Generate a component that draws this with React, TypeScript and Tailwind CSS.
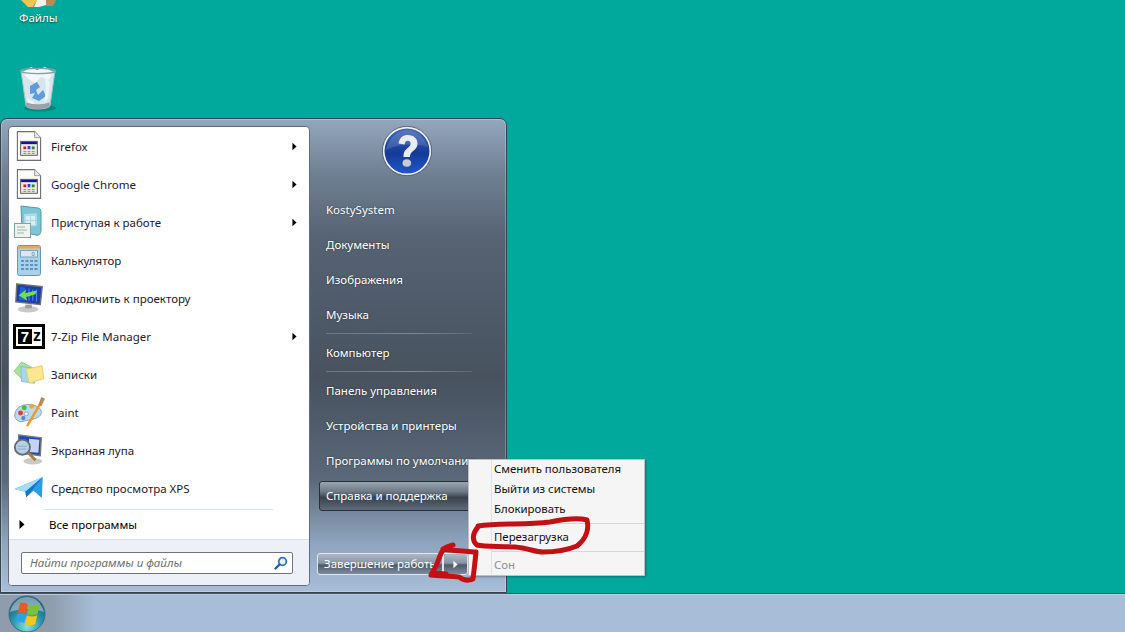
import type { ReactNode } from "react";

const FileIcon = () => (
  <svg width="26" height="32" viewBox="0 0 28 34">
    <path d="M1.5 1.5H20L26.5 8V32.5H1.5Z" fill="#fbfbf8" stroke="#6e6e6e" strokeWidth="1.2" />
    <path d="M20 1.5V8H26.5" fill="#e8e8e8" stroke="#9a9a9a" />
    <rect x="5" y="12" width="18" height="15" fill="#ecebe0" stroke="#555" />
    <rect x="5.5" y="12.5" width="17" height="2.5" fill="#14149a" />
    <rect x="8" y="17.5" width="3" height="3" fill="#d91c1c" />
    <rect x="12.5" y="17" width="3" height="3.5" fill="#2a46d8" />
    <rect x="17" y="17.5" width="3" height="3" fill="#1f8a2c" />
    <path d="M8 23h3M12.5 23h3M17 23h3M8 25h3M12.5 25h3M17 25h3" stroke="#888" />
  </svg>
);

const GettingStartedIcon = () => (
  <svg width="32" height="34" viewBox="0 0 32 34">
    <path d="M8 1L25 3C27 3 28 5 28 7V25C28 29 26 31 23 30L9 27Z" fill="#7cc5d4" stroke="#4c9cb0" />
    <path d="M11 9l13-1v13l-13 1Z" fill="#a9dbe4" />
    <rect x="13" y="11" width="4" height="4" fill="#d7eef2" />
    <rect x="18" y="11" width="4" height="4" fill="#d7eef2" />
    <rect x="13" y="16" width="4" height="4" fill="#d7eef2" />
    <rect x="18" y="16" width="4" height="4" fill="#d7eef2" />
    <rect x="1.5" y="18.5" width="16" height="14" fill="#eef3ee" stroke="#79a8a0" />
    <path d="M4 22h8M4 25h10M4 28h7" stroke="#9fb3ba" />
  </svg>
);

const CalculatorIcon = () => (
  <svg width="24" height="31" viewBox="0 0 24 31">
    <rect x="0.5" y="0.5" width="23" height="30" rx="2" fill="#a9d1ea" stroke="#5f97bf" />
    <rect x="1" y="1" width="22" height="2.5" fill="#efa846" />
    <rect x="3.5" y="5.5" width="17" height="6.5" fill="#dbe9ef" stroke="#7ea3b8" />
    <text x="14.5" y="11" fontSize="6" fontFamily="Liberation Sans, sans-serif" fill="#5b7384">0</text>
    <path d="M4 15h3v2H4zM8.5 15h3v2h-3zM13 15h3v2h-3zM17.5 15h3v2h-3zM4 19h3v2H4zM8.5 19h3v2h-3zM13 19h3v2h-3zM17.5 19h3v2h-3zM4 23h3v2H4zM8.5 23h3v2h-3zM13 23h3v2h-3zM17.5 23h3v2h-3z" fill="#5d93b9" />
  </svg>
);

const ProjectorIcon = () => (
  <svg width="32" height="32" viewBox="0 0 32 34">
    <ellipse cx="15" cy="29" rx="11" ry="3.5" fill="#c9c9c9" />
    <path d="M12 24h7v4h-7Z" fill="#9b9fa3" />
    <path d="M3 2L30 5L28 24L2 21Z" fill="#1d3fae" stroke="#6d7278" strokeWidth="1.5" />
    <path d="M7 5L12 6V20L5 19Z" fill="#1f63d6" />
    <path d="M16 7v13M20 8v12M24 8v13" stroke="#4a86e8" strokeWidth="1.2" />
    <path d="M5 14L13 8L12 12L24 9L23 13L13 16L14 20Z" fill="#6fe04e" />
  </svg>
);

const SevenZipIcon = () => (
  <div className="flex h-[25px] w-[32px] items-center gap-[1px] border-[3px] border-black bg-white pl-[2px]">
    <div className="flex h-[15px] w-[14px] items-center justify-center bg-black font-['Liberation_Sans',sans-serif] text-[15px] font-bold leading-none text-white">
      7
    </div>
    <span className="font-['Liberation_Sans',sans-serif] text-[16px] font-bold leading-none text-black">z</span>
  </div>
);

const NotesIcon = () => (
  <svg width="32" height="26" viewBox="0 0 34 28">
    <path d="M1 11L9 1L22 8L12 22Z" fill="#a9e29a" stroke="#8ecb80" />
    <path d="M8 6L24 8L23 24L9 22Z" fill="#a8d6ef" stroke="#86bcd9" />
    <path d="M14 9L31 5L33 19L17 24Z" fill="#fbe88e" stroke="#e5cd64" />
  </svg>
);

const PaintIcon = () => (
  <svg width="32" height="32" viewBox="0 0 34 34">
    <path d="M2 19C3 11 13 7 23 10C32 13 32 20 26 23C20 26 15 25 11 27C6 28 1 25 2 19Z" fill="#bcd8ea" stroke="#7ba5c0" />
    <circle cx="8" cy="18" r="2.6" fill="#e23b34" />
    <circle cx="12" cy="12.5" r="2.6" fill="#5cb04a" />
    <circle cx="20" cy="11" r="2.6" fill="#f0a628" />
    <circle cx="14" cy="19" r="2.2" fill="#eef6fb" stroke="#7ba5c0" />
    <circle cx="11" cy="23.5" r="2.2" fill="#4a86d8" />
    <path d="M15 32L29 8" stroke="#ef9b25" strokeWidth="2.6" />
    <path d="M27 9L30 1L34 3L30 11Z" fill="#b88a54" />
  </svg>
);

const MagnifierIcon = () => (
  <svg width="32" height="32" viewBox="0 0 32 34">
    <ellipse cx="20" cy="29" rx="10" ry="3.5" fill="#c9c9c9" />
    <path d="M5 1L29 4L28 23L5 20Z" fill="#1d46c2" stroke="#74797f" strokeWidth="1.5" />
    <path d="M16 5L27 6L26 20L16 19Z" fill="#c8d4ee" />
    <circle cx="9" cy="14" r="8" fill="#b9d0e4" stroke="#5d6c78" strokeWidth="2" />
    <path d="M4 13h10M4 16h9" stroke="#8fa8bf" />
    <path d="M15 20L23 28" stroke="#b27a3b" strokeWidth="3" />
  </svg>
);

const XpsIcon = () => (
  <svg width="32" height="22" viewBox="0 0 32 24">
    <path d="M0 13L31 0L30 23L21 15L13 22L12 16Z" fill="#2a9ce8" />
    <path d="M0 13L31 0L12 16Z" fill="#a5dcfa" />
    <path d="M31 0L13 22L12 16Z" fill="#1976c4" />
  </svg>
);

const QuestionIcon = () => (
  <svg width="50" height="50" viewBox="0 0 50 50">
    <defs>
      <linearGradient id="helpBlue" x1="0" y1="0" x2="0" y2="1">
        <stop offset="0" stopColor="#3f67b8" />
        <stop offset="0.55" stopColor="#153a96" />
        <stop offset="1" stopColor="#1f58cf" />
      </linearGradient>
    </defs>
    <circle cx="25" cy="25" r="23.5" fill="url(#helpBlue)" stroke="#f1f3f5" strokeWidth="2" />
    <circle cx="25" cy="25" r="24.6" fill="none" stroke="#33425c" strokeWidth="0.7" />
    <path d="M4 24C7 10 17 4 25 4C35 4 43 11 46 21C32 17 16 18 4 24Z" fill="#ffffff" opacity="0.14" />
    <path
      d="M16.5 17.5C17.5 11.5 21 9 26 9C31.5 9 35.5 12.5 35.5 17.5C35.5 21.5 33 23.5 30.5 25.5C28.5 27 28 28.5 28 31H21.5C21.3 27 22.3 24.8 25 22.6C27.3 20.7 28.6 19.6 28.6 17.8C28.6 16 27.6 14.8 25.8 14.8C23.8 14.8 22.9 16.2 22.6 18.5Z"
      fill="#e8ebf0"
    />
    <ellipse cx="24.8" cy="37" rx="4.3" ry="3.8" fill="#c6cbd4" />
  </svg>
);

const RecycleBin = () => (
  <svg width="38" height="46" viewBox="0 0 38 46">
    <ellipse cx="21" cy="42" rx="16" ry="3.5" fill="#0a7a70" opacity="0.7" />
    <path d="M2 5L7 40C9 44 29 44 31 40L36 5Z" fill="#d5e6ee" stroke="#a9bcc6" />
    <path d="M4 6L12 1L18 4L26 1L34 6L30 14L22 11L16 17L8 12Z" fill="#f1f7fa" />
    <path d="M11 20L18 16L21 21L17 24L19 29L24 24L27 30L20 35L13 32L16 27L11 28Z" fill="#5f9bd8" />
    <path d="M26 12L31 16L29 32L25 37L27 24Z" fill="#edf4f7" />
    <path d="M8 32L15 36L16 40L9 38Z" fill="#edf4f7" />
    <ellipse cx="19" cy="5" rx="17.5" ry="2.6" fill="none" stroke="#8d9ba3" strokeWidth="1.4" />
    <path d="M7 40C10 44 28 44 31 40L30.5 36C27 39 11 39 7.5 36Z" fill="#9aa3a8" />
  </svg>
);

const FolderTop = () => (
  <svg width="36" height="8" viewBox="0 0 36 8">
    <path d="M1 0L8 7H13L17 0Z" fill="#f2c54e" />
    <path d="M17 0H26V5L19 7H14Z" fill="#f5f2e4" />
    <path d="M26 0H36L33 6H26Z" fill="#b98a5a" />
  </svg>
);

const WindowsOrb = () => (
  <svg width="40" height="40" viewBox="0 0 40 40">
    <defs>
      <radialGradient id="orbBg" cx="0.5" cy="0.85" r="0.75">
        <stop offset="0" stopColor="#8fe0d8" />
        <stop offset="0.5" stopColor="#2b9fb0" />
        <stop offset="1" stopColor="#1a5f7c" />
      </radialGradient>
      <filter id="orbBlur">
        <feGaussianBlur stdDeviation="0.4" />
      </filter>
    </defs>
    <circle cx="20" cy="20" r="18" fill="url(#orbBg)" stroke="#3d6d86" />
    <path d="M3 18C6 7 13 3 20 3C28 3 34 8 37 18C27 14 13 14 3 18Z" fill="#cfd6d8" opacity="0.55" />
    <g filter="url(#orbBlur)">
      <path d="M13 9C16 8 18.5 9 21 10.5L19 20C16.5 18.5 13.5 18 10.8 19Z" fill="#ea5a25" />
      <path d="M22 10.5C25 12 29 12 33 9L30.5 20C27 21.5 23.5 21.5 20 20Z" fill="#7cc238" />
      <path d="M10.5 20C13.5 19 16.5 19.5 19 21L17.2 29C14.5 27.5 11 27.2 8.5 28.5Z" fill="#2fa2e6" />
      <path d="M20 21.5C23 23 27 23 30.2 21.2L28.3 30C25 31.8 21.2 31.5 18 30Z" fill="#f8c61e" />
    </g>
  </svg>
);

const SearchGlass = () => (
  <svg width="14" height="14" viewBox="0 0 14 14">
    <circle cx="8.5" cy="5.5" r="3.8" fill="#e8f3fb" stroke="#2a76b8" strokeWidth="1.8" />
    <path d="M5.5 8.5L1.5 12.5" stroke="#1d5f9e" strokeWidth="2.4" strokeLinecap="round" />
  </svg>
);

const Caret = ({ className }: { className: string }) => (
  <svg className={className} viewBox="0 0 6 10" fill="currentColor">
    <path d="M0.5 0.5L5.5 5L0.5 9.5Z" />
  </svg>
);

const programs: { label: string; icon: ReactNode; sub?: boolean }[] = [
  { label: "Firefox", icon: <FileIcon />, sub: true },
  { label: "Google Chrome", icon: <FileIcon />, sub: true },
  { label: "Приступая к работе", icon: <GettingStartedIcon />, sub: true },
  { label: "Калькулятор", icon: <CalculatorIcon /> },
  { label: "Подключить к проектору", icon: <ProjectorIcon /> },
  { label: "7-Zip File Manager", icon: <SevenZipIcon />, sub: true },
  { label: "Записки", icon: <NotesIcon /> },
  { label: "Paint", icon: <PaintIcon /> },
  { label: "Экранная лупа", icon: <MagnifierIcon /> },
  { label: "Средство просмотра XPS", icon: <XpsIcon /> },
];

const places = ["KostySystem", "Документы", "Изображения", "Музыка"];
const system = ["Панель управления", "Устройства и принтеры", "Программы по умолчанию"];

const PlaceRow = ({ label }: { label: string }) => (
  <div className="flex h-[35px] items-center whitespace-nowrap pl-[15px] text-[11.5px] text-white [text-shadow:0_0_2px_rgba(0,0,0,0.5)]">
    {label}
  </div>
);

const PlaceSeparator = () => (
  <div className="flex h-[3px] items-center pl-[15px] pr-[34px]">
    <div className="h-px w-full bg-[linear-gradient(90deg,#6b7685,#7d8896_60%,#5d6876)]" />
  </div>
);

const MenuItem = ({ label, disabled }: { label: string; disabled?: boolean }) => (
  <div className={`flex h-[20px] items-center pl-[25px] text-[11.4px] ${disabled ? "text-[#8f8f8f]" : "text-[#111]"}`}>
    {label}
  </div>
);

const MenuSeparator = () => (
  <div className="flex h-[8px] items-center pl-[23px]">
    <div className="h-px w-full bg-[#d7d7d7]" />
  </div>
);

export default function App() {
  return (
    <div className="flex h-[632px] w-[1125px] flex-col overflow-hidden bg-[#00a99c] font-['Noto_Sans','Open_Sans',sans-serif]">
      <main className="relative flex-1">
        {/* desktop icons */}
        <div className="absolute left-[20px] top-0">
          <FolderTop />
        </div>
        <div className="absolute left-[19px] top-[9px] text-[11.5px] text-white [text-shadow:0_1px_2px_rgba(0,0,0,0.6)]">
          Файлы
        </div>
        <div className="absolute left-[19px] top-[66px]">
          <RecycleBin />
        </div>

        {/* start menu */}
        <div className="absolute bottom-0 left-0 flex h-[475px] w-[507px] rounded-t-[7px] border border-[#39434e] bg-[linear-gradient(180deg,#93a7be_0%,#6f7f92_12%,#566373_25%,#48525f_55%,#5a6879_76%,#90a6c0_90%,#a7bdd8_100%)] pl-[7px] pt-[7px] shadow-[inset_0_0_0_1px_rgba(255,255,255,0.25)]">
          <div className="flex h-[460px] w-[302px] flex-col overflow-hidden rounded-[4px] border border-[#5f6d7d] bg-white">
            <div className="flex h-[380px] flex-col">
              {programs.map((p) => (
                <div key={p.label} className="flex h-[38px] shrink-0 items-center">
                  <div className="flex w-[42px] shrink-0 items-center justify-center pr-[2px]">{p.icon}</div>
                  <span className="flex-1 pt-[2px] text-[11.5px] text-[#1c1a2c]">{p.label}</span>
                  {p.sub && <Caret className="mr-[12px] h-[9px] w-[5px] text-black" />}
                </div>
              ))}
            </div>
            <div className="mx-[36px] mt-[2px] h-px bg-[#d6e1ef]" />
            <div className="flex h-[29px] items-center pl-[10px] text-[11.5px] text-black">
              <Caret className="h-[11px] w-[6px] text-black" />
              <span className="pl-[24px]">Все программы</span>
            </div>
            <div className="flex flex-1 items-center border-t border-[#d9e2ec] bg-[#edf1f7] pl-[12px] pr-[16px]">
              <div className="flex h-[22px] w-full items-center justify-between rounded-[2px] border border-[#70747a] bg-white pl-[8px] pr-[4px] text-[11.5px] italic text-[#6d6d6d]">
                <span>Найти программы и файлы</span>
                <SearchGlass />
              </div>
            </div>
          </div>

          <div className="flex flex-1 flex-col pl-[1px]">
            <div className="flex h-[66px] shrink-0 justify-center pr-[3px]">
              <QuestionIcon />
            </div>
            {places.map((l) => (
              <PlaceRow key={l} label={l} />
            ))}
            <PlaceSeparator />
            <PlaceRow label="Компьютер" />
            <PlaceSeparator />
            {system.map((l) => (
              <PlaceRow key={l} label={l} />
            ))}
            <div className="flex h-[35px] items-center">
              <div className="ml-[8px] flex h-[30px] w-[160px] items-center rounded-[3px] border border-[#2a3038] bg-[linear-gradient(180deg,#9aa5b1_0%,#6d7986_35%,#39424d_55%,#5f6b79_100%)] pl-[6px] text-[11.5px] text-white">
                Справка и поддержка
              </div>
            </div>
            <div className="ml-[6px] mt-[40px] flex h-[22px] w-[151px] text-white">
              <div className="flex w-[126px] items-center whitespace-nowrap rounded-l-[3px] border border-[#dfe6ee] bg-[linear-gradient(180deg,#aeb9c5_0%,#8795a5_45%,#4e5a68_55%,#7e8c9d_100%)] pl-[6px] text-[11.5px]">
                Завершение работы
              </div>
              <div className="flex flex-1 items-center justify-center rounded-r-[3px] border border-[#dfe6ee] bg-[linear-gradient(180deg,#aeb9c5_0%,#8795a5_45%,#4e5a68_55%,#7e8c9d_100%)]">
                <Caret className="h-[9px] w-[5px] text-white" />
              </div>
            </div>
          </div>
        </div>

        {/* shutdown submenu */}
        <div className="absolute left-[468px] top-[459px] flex h-[117px] w-[177px] flex-col border border-[#c0c0c0] bg-[#f5f5f5] shadow-[1px_1px_2px_rgba(0,0,0,0.3)]">
          <div className="pointer-events-none absolute bottom-0 left-[22px] top-0 w-px bg-[#e2e2e2]" />
          <div className="-mt-px">
            <MenuItem label="Сменить пользователя" />
            <MenuItem label="Выйти из системы" />
            <MenuItem label="Блокировать" />
            <MenuSeparator />
            <MenuItem label="Перезагрузка" />
            <MenuSeparator />
            <MenuItem label="Сон" disabled />
          </div>
        </div>

        {/* red marker scribbles */}
        <svg className="pointer-events-none absolute left-0 top-0" width="1125" height="593" viewBox="0 0 1125 593" fill="none">
          <path
            d="M478 526C500 523 525 525 550 522C565 519 580 518 587 520C589 528 587 538 577 546C565 551 552 552 543 552C535 552 528 548 515 547C500 546 485 547 477 545C472 541 472 534 478 527"
            stroke="#c40f14"
            strokeWidth="5"
            strokeLinecap="round"
            strokeLinejoin="round"
          />
          <path
            d="M453 545C449 546 446 547 443 549C455 551 466 551 476 552C475 562 474 571 473 579C468 581 463 580 459 577C450 576 440 576 431 575C434 570 437 565 438 561C440 556 441 552 444 549M433 573L446 574"
            stroke="#c40f14"
            strokeWidth="5"
            strokeLinecap="round"
            strokeLinejoin="round"
          />
        </svg>
      </main>

      <footer className="relative h-[39px] shrink-0 border-t border-[#46525e] bg-[linear-gradient(90deg,#8e9cab_0px,#8e9cab_50px,#a7bdd8_95px,#a7bdd8_100%)] shadow-[inset_0_1px_0_#b9cbe0]">
        <div className="absolute left-[7px] top-0">
          <WindowsOrb />
        </div>
      </footer>
    </div>
  );
}
